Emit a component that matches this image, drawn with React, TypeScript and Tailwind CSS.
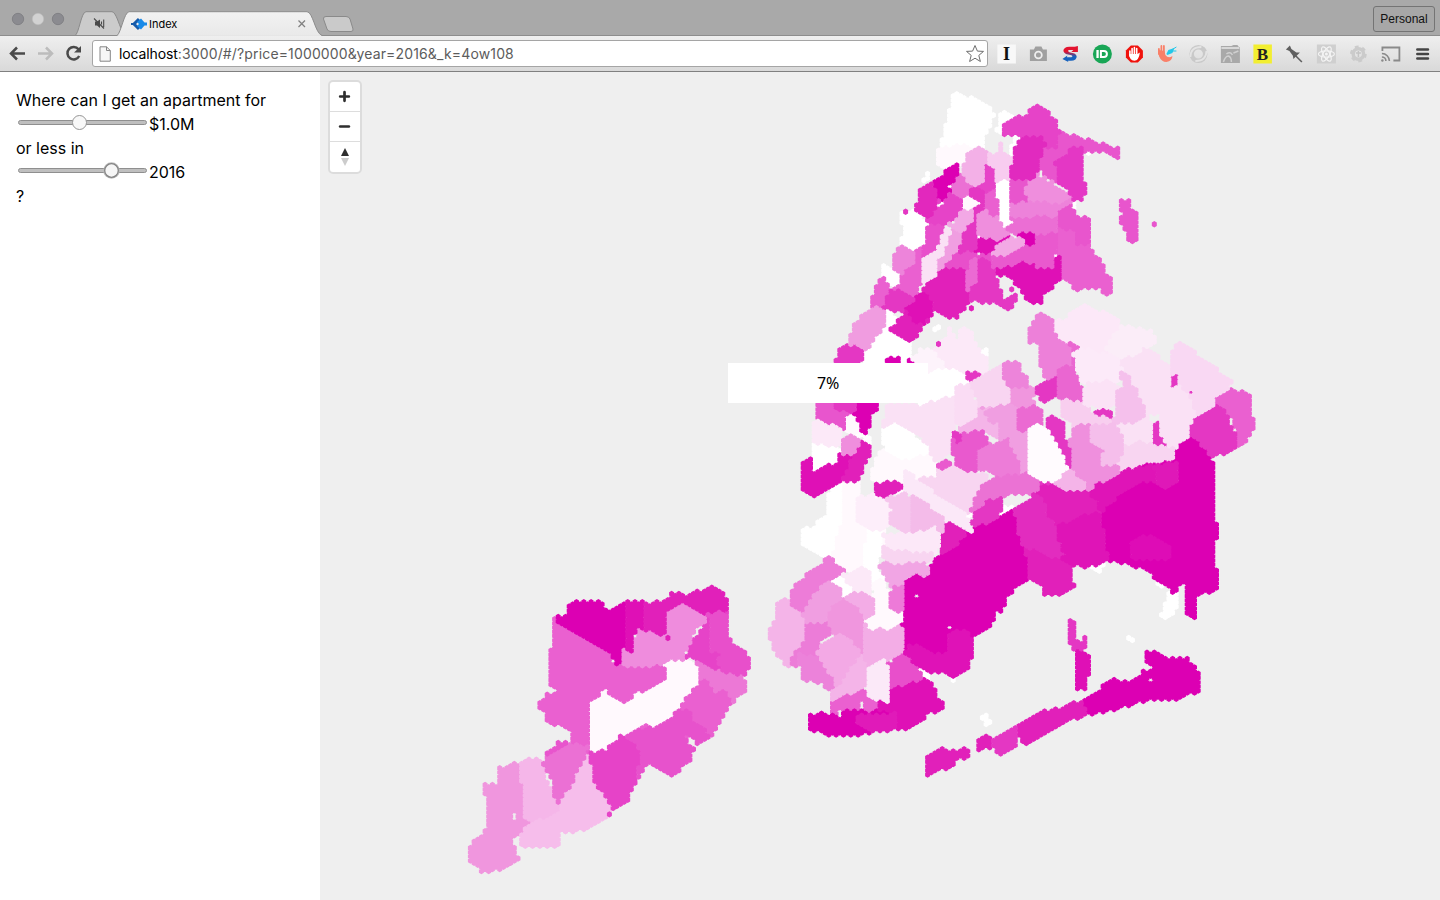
import React from "react";

type Shape = { color: string; pts: number[][]; x0: number; y0: number; x1: number; y1: number };

const A = "#dc00b3";
const B = "#df10b6";
const C = "#e120ba";
const D = "#e437c3";
const E = "#e84fcb";
const F = "#ea60d0";
const G = "#ed7ad8";
const H = "#ef8edd";
const I = "#f09ee1";
const J = "#f4b4e8";
const L = "#f8d5f1";
const M = "#fae1f5";
const N = "#fce9f8";
const O = "#fff9fd";
const W = "#ffffff";
const BG = "#efefef";

// Each sheet has its origin on the map; three sheet units make one pixel.
type Sheet = { ox: number; oy: number; areas: [string, string][] };

const bronx: Sheet = {
  ox: 840,
  oy: 80,
  areas: [
    [W, "333,42 350,37 380,50 415,58 440,70 467,95 455,125 455,150 440,160 432,205 400,200 380,190 300,203 300,190 310,150 322,110 330,80"],
    [W, "475,90 505,90 525,105 500,125 488,150 488,170 462,158 475,130"],
    [O, "300,200 325,195 380,185 400,205 378,230 368,265 340,250 320,265 290,265 288,215"],
    ["#f3b0e7", "400,200 445,212 455,240 440,255 435,290 415,320 395,320 370,300 365,265 378,230 400,215"],
    ["#f8ccf0", "450,220 475,215 474,188 490,188 492,220 520,235 512,270 510,295 490,295 470,308 465,262 445,250"],
    [W, "525,165 544,168 537,192 522,230 506,230 506,220"],
    ["#e643c8", "590,70 655,118 657,155 690,170 665,190 650,205 620,205 600,185 590,170 540,170 525,165 485,166 485,138 520,108 560,108 565,90"],
    ["#e12abf", "540,172 600,170 620,195 605,220 598,265 590,285 560,300 510,295 512,268 520,260 525,200"],
    ["#e855cd", "657,160 690,163 755,180 790,190 842,206 843,243 828,243 800,219 760,215 735,225 720,205 690,205 680,230 640,240 655,290 660,315 635,300 600,275 598,250 605,215 650,200"],
    ["#e437c5", "690,205 732,205 737,255 724,262 732,300 744,325 738,355 710,367 690,345 685,325 650,310 655,265 632,250 640,240 680,232"],
    ["#e855cd", "510,295 560,295 570,310 555,330 565,370 510,372"],
    [H, "590,278 690,345 695,365 660,372 640,375 590,365 565,370 555,325 568,305"],
    ["#ed82da", "510,372 565,365 640,375 695,360 690,380 660,395 650,415 635,415 610,400 580,412 520,410 508,400"],
    ["#eb6ed4", "508,410 580,410 610,402 635,415 652,410 655,450 620,465 590,465 560,452 540,462 510,462"],
    ["#e855cd", "660,385 700,365 708,410 754,407 754,490 710,495 705,455 655,440 652,400"],
    [F, "652,445 705,450 710,495 754,490 757,520 785,540 803,585 822,595 820,635 800,652 770,622 735,627 700,642 685,600 665,600 665,530 650,525"],
    ["#e959ce", "590,465 652,455 655,530 640,560 580,562 550,545 500,560 470,565 455,535 470,530 555,505 585,500"],
    [A, "542,455 575,452 588,475 585,500 565,505 545,480"],
    ["#f3a9e5", "455,525 470,500 520,470 550,475 555,505 520,515 490,530 460,530"],
    [B, "400,480 440,475 480,475 505,460 515,470 470,500 455,525 420,522 402,510"],
    [H, "410,390 440,395 465,410 485,420 495,448 520,455 505,462 480,478 415,472"],
    [W, "470,310 500,292 510,300 510,400 518,425 495,447 480,425 468,405 480,390 475,360 458,350"],
    ["#e643c8", "435,255 450,250 465,262 470,310 465,330 430,345 415,345 395,320 430,315 435,290"],
    [F, "435,340 460,330 475,360 478,390 465,412 440,400 435,380"],
    [A, "335,250 357,254 355,290 338,330 310,360 290,365 290,330 265,310 300,290 325,262"],
    ["#e228bd", "233,325 265,304 290,330 292,370 280,400 262,418 213,385 233,365"],
    ["#eb70d4", "335,315 350,288 370,285 395,320 390,345 370,358 340,345 330,330"],
    [D, "390,320 435,330 435,400 410,395 410,470 390,495 370,460 385,440 400,400 405,360 390,340"],
    ["#e643c8", "290,370 310,360 340,345 370,358 365,385 355,410 335,430 280,437 262,420 280,400"],
    [O, "365,385 372,362 395,345 405,362 420,365 415,385 395,390 375,390"],
    ["#f2a8e5", "375,390 400,388 400,415 385,440 365,460 345,460 335,432 355,410"],
    [D, "365,460 400,415 410,480 405,510 370,520 345,520 370,490"],
    ["#e84fcb", "310,560 345,520 400,510 415,530 455,525 460,560 410,545 390,540 390,575 350,562"],
    [I, "325,465 345,455 370,460 368,495 340,525 320,545 300,570 288,580 295,545 315,520"],
    [M, "312,440 333,440 335,465 320,475 315,520 290,545 288,595 250,615 247,535 280,530 280,510 300,480"],
    [E, "262,430 312,437 312,460 300,480 285,520 248,535 245,500 258,470"],
    [W, "178,403 210,388 267,430 258,460 255,495 210,512 178,490 190,455"],
    ["#ed84da", "170,490 210,512 225,510 228,540 210,570 180,580 155,547"],
    [F, "228,510 245,500 247,535 247,610 230,625 245,650 210,650 180,635 155,625 180,605 185,580 228,545"],
    [W, "138,546 155,560 182,588 182,610 160,622 145,600 122,584 125,564"],
    [F, "126,590 148,610 150,630 138,650 140,685 92,683 88,655 103,635 113,600"],
    [D, "150,630 180,632 210,650 240,648 225,665 195,680 190,700 140,690 138,655"],
    [C, "245,625 290,590 300,570 340,560 385,570 375,600 382,625 400,630 388,650 390,667 350,717 335,717 300,697 270,677 265,650 240,645"],
    ["#eb6ad3", "390,540 410,535 410,600 385,632 372,625 378,600"],
    [D, "412,545 440,535 465,565 470,600 480,620 500,640 482,673 440,673 400,663 385,667 388,640 410,600"],
    [B, "460,565 500,562 540,548 580,550 590,560 640,562 645,532 665,525 665,602 645,607 632,632 612,637 610,670 590,676 566,672 548,637 520,612 495,587 475,597"],
    [D, "484,672 504,650 525,638 536,655 522,670 518,692 500,696 484,684"],
    ["#e855cd", "836,362 855,356 874,362 874,385 897,397 897,483 878,494 860,482 858,450 843,432 836,420 846,400 836,390"],
  ],
};

const manhattan: Sheet = {
  ox: 790,
  oy: 290,
  areas: [
    ["#f09ce0", "238,53 285,58 285,100 270,125 250,150 235,185 215,180 200,165 162,160 188,115 198,88"],
    [D, "150,170 190,161 218,170 222,200 215,225 128,225 143,195"],
    [W, "282,70 300,63 322,73 315,105 300,130 320,135 340,140 360,155 367,200 350,215 355,250 220,250 225,200 240,170 265,140 282,110"],
    [C, "345,50 400,20 425,40 432,65 412,100 390,120 387,142 360,154 320,135 298,125 315,100 345,70"],
    [B, "345,50 375,25 400,0 435,40 430,65 410,95 380,110 355,80"],
    [A, "285,228 287,208 303,198 328,206 332,228"],
    [A, "352,228 352,203 378,209 376,228"],
    ["#fdf3fb", "373,190 400,173 430,183 465,220 450,245 420,250 370,250 370,215"],
    [N, "470,110 487,110 492,138 520,155 557,153 562,175 597,198 597,245 560,260 520,245 470,230 430,185 455,148 468,140"],
    [N, "503,118 547,110 554,145 530,160 503,142"],
    [W, "425,117 438,102 457,98 457,117 440,134 427,130"],
    [W, "568,170 590,173 600,197 575,197"],
    [M, "280,338 390,338 440,338 460,325 495,325 495,400 485,430 485,480 460,510 420,510 415,460 375,430 320,392 273,420 285,370"],
    [W, "400,250 465,230 525,245 545,275 510,290 495,325 460,325 440,335 390,345 380,300"],
    [L, "575,255 640,215 640,265 660,290 660,340 640,345 600,355 565,350 560,320 540,300 540,275"],
    ["#fadcf4", "500,290 540,280 545,305 565,350 555,390 520,405 495,410 490,370 500,325"],
    [D, "528,253 545,246 577,246 574,264 547,280 528,270"],
    ["#ed84da", "638,212 682,212 692,235 717,260 717,290 700,290 660,295 640,265"],
    ["#f096de", "660,295 735,290 730,350 710,360 680,355 660,340"],
    [I, "515,405 555,385 565,352 660,340 685,360 690,425 715,420 717,570 690,560 660,445 630,460 595,425 570,420 520,430"],
    [J, "498,420 520,403 560,385 565,352 600,350 585,375 600,395 625,400 630,455 595,425 570,420 520,432"],
    ["#e959ce", "485,425 510,435 560,420 595,430 595,465 560,480 560,540 520,545 490,515 485,480"],
    ["#e959ce", "440,525 470,506 495,520 492,547 460,540"],
    ["#ed7cd8", "560,480 595,465 630,450 655,445 670,480 705,520 705,555 640,565 600,550 562,540"],
    ["#e437c3", "483,422 510,433 517,455 500,467 485,445"],
    ["#eb6ad2", "682,360 705,355 732,345 760,355 757,400 715,420 700,430 682,420"],
    ["#e855cd", "75,330 205,330 190,365 165,385 160,420 110,405 77,382"],
    [D, "135,330 205,330 195,365 165,365 135,352"],
    [A, "190,370 205,330 272,330 262,365 247,375 242,400 228,432 210,427 205,385"],
    [N, "78,385 110,400 160,415 155,470 145,465 100,470 68,457 66,403"],
    [O, "175,375 195,378 208,410 212,435 175,440 165,420"],
    [W, "210,430 235,425 244,460 218,457"],
    [H, "155,440 200,435 212,465 190,490 155,490 152,465"],
    [W, "63,456 100,460 150,475 150,505 140,525 80,555 55,545 60,500"],
    [C, "215,450 246,468 237,515 222,532 214,574 155,574 145,560 150,510 190,490"],
    [B, "31,535 43,503 68,506 64,540 75,550 115,525 145,520 148,492 188,493 165,562 115,593 75,624 31,599"],
    [W, "273,420 315,392 375,430 380,450 415,465 418,490 380,500 340,510 280,480"],
    [O, "280,480 340,508 400,490 415,490 445,530 450,565 400,562 355,575 350,590 300,575 255,582 241,560 253,500 275,480"],
    [L, "395,575 440,565 445,540 490,520 520,545 560,545 600,560 600,580 570,600 570,625 540,640 540,660 520,660 480,640"],
  ],
};

const queens: Sheet = {
  ox: 1000,
  oy: 290,
  areas: [
    ["#ed80d9", "118,66 162,80 164,120 175,155 215,165 218,190 215,225 185,240 150,264 128,264 126,230 113,225 113,165 81,163 83,133 93,104"],
    ["#ea66d1", "215,170 235,155 240,172 222,190 222,230 240,275 250,300 254,340 260,359 210,332 170,332 175,240 215,225"],
    [D, "103,300 165,253 175,275 170,312 135,342 113,325"],
    ["#fce8f8", "163,88 200,92 203,68 245,43 285,58 347,73 367,103 345,140 325,165 320,195 280,185 240,175 215,160 180,155 172,125"],
    ["#fbedf8", "345,130 370,106 430,116 462,121 469,160 440,180 400,195 365,205 335,200 315,180"],
    ["#fceaf9", "220,190 260,175 290,190 355,195 365,240 350,295 320,290 260,280 240,270"],
    ["#fbe2f6", "248,285 320,275 355,290 345,350 300,355 252,345"],
    [M, "360,205 400,195 430,173 477,183 482,210 512,225 520,270 560,295 580,340 585,370 580,400 570,435 525,475 460,465 420,455 370,470 360,440 345,400 430,385 425,350 400,300 385,260 365,240"],
    [BG, "447,385 460,368 482,385 478,398 455,400"],
    ["#f9d8f3", "540,150 707,278 685,300 645,325 640,350 605,377 585,362 570,310 530,280 515,260 510,215 520,168"],
    ["#f5c0ec", "360,240 385,250 395,280 410,300 430,350 435,385 400,398 345,400 350,310 365,290"],
    [D, "281,370 306,348 317,350 322,366 339,368 341,400 320,390 300,379"],
    [D, "512,260 524,244 537,246 537,272 526,290 510,290"],
    [D, "455,400 475,394 482,440 504,460 502,474 456,470"],
    ["#f8ceef", "180,340 210,330 245,338 285,370 330,392 345,400 270,405 215,410 195,390 175,375"],
    ["#ef8fdd", "215,410 270,405 275,450 315,480 300,520 360,525 360,560 320,578 280,600 262,612 255,575 225,545 210,500"],
    ["#f5beeb", "270,410 345,400 365,440 370,490 350,525 295,520 315,490 300,462 272,460"],
    [L, "370,480 420,455 460,465 525,475 523,510 440,530 400,545 360,555 362,500"],
    [I, "32,430 85,418 85,560 70,555 60,520 45,490"],
    ["#fffbfe", "85,420 135,402 155,440 180,480 205,520 200,535 185,550 180,570 150,574 120,578 85,562"],
    ["#e437c3", "136,388 165,371 192,400 197,440 210,470 219,500 213,542 195,520 180,475 150,430"],
    [J, "160,575 210,535 235,555 260,580 264,610 185,605"],
    ["#eb72d4", "-60,620 -30,575 0,560 50,555 80,550 130,580 105,600 100,614 60,612 0,612 -30,635"],
    [D, "103,610 110,578 160,576 180,602 130,625"],
    [F, "643,325 685,296 754,306 759,380 769,400 757,430 732,462 705,482 690,470 710,430 690,375 650,345"],
    [D, "633,346 660,350 680,365 690,400 708,430 708,482 670,492 635,499 600,460 566,442 568,410 588,380 620,373"],
  ],
};

const brooklyn: Sheet = {
  ox: 760,
  oy: 480,
  areas: [
    [W, "123,146 163,140 178,113 198,103 198,43 228,10 270,5 255,110 240,130 215,232 185,237 150,212 121,192"],
    [O, "245,5 302,5 305,45 330,50 380,50 380,150 370,200 330,265 300,265 250,280 225,250 215,230 220,190 240,140"],
    ["#fdeefa", "290,50 340,45 380,60 400,100 385,140 365,155 335,150 295,135"],
    [O, "335,5 345,-10 430,-20 455,30 430,42 400,40 380,60 345,55"],
    [W, "320,150 365,150 370,205 355,240 350,280 375,290 388,350 385,400 345,400 345,350 330,290 310,250"],
    [O, "335,310 375,290 388,350 390,390 440,400 440,430 390,450 345,445 325,458 310,430 340,405 345,350"],
    [C, "343,10 410,3 432,25 400,42 370,58 343,45"],
    ["#f6c6ed", "385,55 430,40 450,50 455,150 430,160 385,130 395,95"],
    ["#f4bbe9", "450,50 485,60 555,120 560,165 530,155 490,155 455,155"],
    ["#fbe8f8", "430,-10 440,-30 480,10 520,40 620,100 637,155 610,158 555,120 485,62 430,35"],
    [L, "480,5 490,-10 600,-10 690,-10 660,50 630,95 615,100"],
    ["#fce8f8", "370,160 430,160 490,150 525,138 542,165 535,200 520,235 480,225 375,205"],
    [L, "370,205 480,220 530,220 500,250 460,255 365,245"],
    ["#f1a5e4", "360,250 500,245 512,290 450,285 430,295 425,320 390,320 375,290 355,265"],
    [G, "390,322 430,315 432,390 410,394 390,375"],
    [C, "555,120 620,155 625,185 600,205 535,225 545,175 555,160"],
    ["#ed7cd8", "215,226 227,255 257,275 240,290 190,310 180,330 145,370 135,402 93,384 86,340 108,306 180,251"],
    [I, "145,370 190,310 215,305 240,325 250,350 310,390 310,520 270,510 240,470 210,460 200,425 145,430 130,400"],
    ["#f096de", "250,350 310,390 310,520 270,510 240,470 210,460 200,400 225,370"],
    [W, "208,300 250,288 278,305 278,335 250,353 240,325"],
    [N, "250,290 290,262 330,270 335,345 310,350 278,330"],
    [J, "80,350 95,380 125,400 135,420 135,470 115,520 90,564 48,532 23,465 43,420 43,370"],
    ["#ec7cd8", "135,430 200,425 210,460 180,490 170,525 140,532 117,520 115,562 90,560 92,530 115,510 135,470"],
    ["#f3ace6", "255,350 280,335 340,350 345,400 320,415 310,430 305,395 270,360"],
    ["#f3a9e5", "170,520 200,480 245,465 270,480 305,525 260,570 250,600 215,640 190,560"],
    ["#f4b4e8", "208,635 250,600 260,570 310,525 325,530 325,600 310,625 270,640 212,668"],
    ["#f3ade6", "310,430 330,450 390,450 440,435 442,480 430,520 390,545 360,540 320,560 310,520"],
    ["#ec82da", "120,530 175,525 195,560 225,605 210,637 175,607 120,602"],
    ["#fbe9f8", "322,565 365,540 388,555 388,665 335,655 322,630"],
    [E, "388,555 430,520 450,545 480,565 490,590 450,610 388,620"],
    [F, "209,660 270,640 310,625 335,655 355,665 355,700 300,705 230,705 209,700"],
    [A, "143,710 185,693 235,713 260,690 300,690 330,700 355,690 360,660 388,665 388,620 450,610 495,590 522,605 532,650 567,680 520,697 502,702 497,722 430,752 350,757 320,762 270,772 210,770 143,744"],
    [B, "355,690 360,660 388,665 388,620 450,610 495,590 522,605 532,650 567,680 520,697 502,702 497,722 430,752 410,747 400,700"],
    ["#e01ab9", "290,705 410,700 410,752 330,759 290,735"],
  ],
};

const jamaica: Sheet = {
  ox: 900,
  oy: 480,
  areas: [
    [A, "12,293 50,283 90,290 90,245 130,220 220,155 220,130 270,130 345,85 360,180 380,210 388,302 322,347 312,392 282,400 287,427 245,452 200,477 140,460 150,520 60,520 12,510"],
    [A, "575,40 580,10 615,0 680,-30 740,-50 820,-60 825,-95 865,-130 900,-110 940,-60 949,-50 949,130 959,145 959,170 949,180 949,260 959,275 957,322 925,337 892,347 887,372 894,424 880,424 851,399 860,350 850,312 837,312 834,345 800,327 800,312 710,262 650,249 620,242 600,257 570,264 513,257 495,235 480,190 465,150 600,100"],
    ["#e22cbf", "340,85 410,45 435,60 440,95 470,140 480,190 495,235 450,230 380,205 360,160"],
    [C, "405,40 410,10 460,10 490,30 580,30 615,80 600,105 540,110 475,140 445,110 430,50"],
    [C, "375,205 420,210 450,235 495,235 517,250 522,310 530,322 500,334 480,345 425,347 423,312 388,300"],
    ["#df14b7", "465,150 540,110 600,100 615,170 625,245 570,262 510,257 495,235 480,190"],
    ["#df14b7", "570,45 582,10 615,0 680,-30 760,-50 800,0 710,10 640,60 600,100 590,60"],
    ["#df18b8", "760,-40 830,-55 835,0 800,30 770,15"],
    ["#de0cb6", "690,190 730,165 780,180 810,200 812,235 690,235"],
    ["#df12b7", "20,500 60,495 90,520 140,520 140,460 200,445 224,490 217,530 212,567 180,582 160,600 138,579 80,579 45,545 20,530"],
    ["#eb72d4", "240,20 290,0 410,0 415,38 300,50 250,80 208,105 220,60"],
    [D, "235,80 270,55 310,55 312,75 300,105 265,130 218,140 218,105"],
    [W, "296,107 320,80 345,70 342,88 305,112"],
    [W, "570,260 600,257 620,243 612,266 590,280"],
    [W, "752,295 790,307 795,330 776,322"],
    [W, "798,338 832,338 839,370 822,402 795,424 775,407 793,380"],
    [W, "675,478 697,458 708,470 704,500 695,500"],
    [W, "236,712 258,693 268,712 280,740 256,739"],
    [W, "53,560 70,563 94,583 90,602 66,592"],
    [D, "500,420 520,416 532,450 532,485 545,488 548,468 566,470 566,505 542,508 530,518 508,490 500,480"],
    [B, "523,512 545,508 576,533 576,579 564,584 564,622 545,632 523,622"],
    [C, "73,830 105,811 137,801 155,813 212,801 214,840 185,834 140,872 120,870 95,890 74,880"],
    [C, "216,795 245,766 277,768 277,800 240,814"],
    [D, "275,775 315,751 350,741 354,802 305,832 283,817"],
    [C, "350,741 425,684 440,691 500,678 550,656 570,704 530,722 510,714 478,746 465,744 412,779 365,799"],
    [A, "550,658 575,636 601,633 603,610 630,594 690,606 720,576 755,563 733,545 733,510 765,511 800,538 850,526 884,550 904,580 904,646 865,646 830,664 740,662 690,677 630,696 575,706 555,687"],
  ],
};

const staten: Sheet = {
  ox: 460,
  oy: 580,
  areas: [
    [F, "276,110 390,190 460,225 500,255 560,258 720,250 755,270 860,290 864,335 822,367 787,417 752,472 722,499 680,470 650,400 500,480 390,520 330,490 330,450 300,437 253,430 253,397 230,392 246,346 290,335 263,317 264,233 276,200"],
    [A, "286,102 300,102 320,113 320,78 350,60 432,61 437,88 460,88 498,66 500,190 485,210 485,252 465,252 455,222 400,190 300,135 286,137"],
    [B, "498,66 525,58 560,61 570,120 555,155 540,145 520,165 522,220 488,210 498,190"],
    [C, "555,68 600,63 640,36 690,43 755,16 809,53 809,110 780,88 740,105 665,70 620,90 618,165 580,160 555,155"],
    ["#ef8cdd", "535,140 580,160 620,170 620,100 608,95 665,70 740,105 738,130 700,160 690,190 672,225 685,248 590,255 490,260 487,205 518,220"],
    ["#e643c8", "740,110 800,90 805,175 852,210 874,245 872,270 835,292 770,275 720,245 675,230 690,190 710,160 740,140"],
    [E, "745,110 780,88 809,107 809,175 852,208 874,243 872,270 835,294 790,275 770,240 790,210 745,225"],
    ["#ec78d6", "720,250 760,270 852,288 864,337 820,367 800,325 765,340 750,300 720,295"],
    [O, "390,365 435,330 500,372 520,345 615,300 620,285 608,250 625,240 690,240 717,258 717,315 685,345 650,400 620,420 590,445 560,435 480,470 435,510 400,520 388,515"],
    ["#e752cc", "650,395 685,390 700,420 750,465 722,501 715,495 680,462 670,470 710,505 687,547 640,599 570,552 532,602 512,632 512,659 437,716 455,680 400,600 390,520 435,510 490,470 560,440 590,445 620,420"],
    ["#e643c8", "390,520 435,510 480,470 500,470 540,510 532,602 512,632 512,659 437,716 440,690 455,680 400,600"],
    ["#e855cd", "253,534 253,513 275,503 290,484 335,486 335,510 280,520"],
    ["#eb70d4", "245,540 290,510 330,490 385,500 370,560 295,670 265,580"],
    ["#f6bdeb", "380,520 390,525 400,600 455,680 437,712 400,739 325,764 304,752 302,807 230,807 178,799 178,765 210,720 260,710 300,670 330,620"],
    ["#f5b6e9", "170,560 220,526 245,545 270,620 295,670 300,690 265,715 210,725 190,710 190,620"],
    ["#f096de", "145,545 178,546 180,600 190,630 190,710 215,730 160,775 170,815 184,835 165,854 120,872 65,882 23,842 23,798 78,750 78,655 64,640 68,610 110,610 111,580 99,572 118,551 140,563"],
  ],
};

function toShapes(sheet: Sheet): Shape[] {
  return sheet.areas.map(([color, text]) => {
    const pts = text.split(" ").map((p) => {
      const [x, y] = p.split(",").map(Number);
      return [sheet.ox + x / 3, sheet.oy + y / 3];
    });
    const xs = pts.map((p) => p[0]);
    const ys = pts.map((p) => p[1]);
    return { color, pts, x0: Math.min(...xs), x1: Math.max(...xs), y0: Math.min(...ys), y1: Math.max(...ys) };
  });
}

const shapes: Shape[] = [bronx, manhattan, queens, brooklyn, jamaica, staten].flatMap(toShapes).reverse();

function colorAt(x: number, y: number): string | null {
  for (const s of shapes) {
    if (x < s.x0 || x > s.x1 || y < s.y0 || y > s.y1) continue;
    let inside = false;
    for (let i = 0, j = s.pts.length - 1; i < s.pts.length; j = i++) {
      const [xi, yi] = s.pts[i];
      const [xj, yj] = s.pts[j];
      if (yi > y !== yj > y && x < ((xj - xi) * (y - yi)) / (yj - yi) + xi) inside = !inside;
    }
    if (inside) return s.color === BG ? null : s.color;
  }
  return null;
}

// Single cells, and cells left empty.
const singles: [number, number, string][] = [
  [1154.3, 224.3, "#e855cd"], [905.7, 212.7, D], [971.3, 308, C], [1011.7, 288.3, D],
  [938.3, 344, D], [1190.7, 391.7, D], [668, 639.3, C], [949.7, 185.3, W], [941, 203.7, W],
  [939, 205.5, W], [977, 238, W], [980, 235.5, W], [1055.7, 255.3, W], [1087, 154, W],
  [1089.5, 152, W], [1073.7, 202, W], [1074.3, 207, W], [927, 173.5, W], [924.5, 179, W], [928, 177, W],
  [968, 517.5, W], [971, 516, W], [953, 679, W],
];
const holes: [number, number][] = [
  [613.3, 659.3], [514.3, 812.7], [514.3, 817], [916.7, 595], [949.5, 625.7], [1150.8, 678.5],
  [862, 704], [862, 708.5], [839.5, 711], [839.5, 715],
];

const DX = 3.657;
const DY = 4.2;
const X0 = 1154.3 - DX * 200;
const Y0 = 224.3 - DY * 40;

function snap(x: number, y: number): string {
  const c = Math.round((x - X0) / DX);
  const r = Math.round((y - Y0 - (c % 2 ? DY / 2 : 0)) / DY);
  return c + ":" + r;
}

function buildCells(): [string, string][] {
  const probes = Array.from({ length: 8 }, (_, k) => {
    const a = ((22.5 + 45 * k) * Math.PI) / 180;
    return [Math.cos(a), Math.sin(a)];
  });
  const forced = new Map(singles.map(([x, y, c]) => [snap(x, y), c]));
  const empty = new Set(holes.map(([x, y]) => snap(x, y)));
  const paths = new Map<string, string[]>();
  for (let c = 0; c < 235; c++) {
    for (let r = 0; r < 205; r++) {
      const x = X0 + c * DX;
      const y = Y0 + r * DY + (c % 2 ? DY / 2 : 0);
      const key = c + ":" + r;
      if (empty.has(key)) continue;
      let color = forced.get(key) ?? null;
      if (!color) {
        const own = colorAt(x, y);
        const reach = own ? 2.7 : 3.8;
        const around = probes.map(([dx, dy]) => colorAt(x + dx * reach, y + dy * reach)).filter(Boolean) as string[];
        if (own ? around.length >= 5 : around.length >= 7) color = own ?? around[0];
      }
      if (!color) continue;
      const d = `M${x.toFixed(1)} ${(y - 3.2).toFixed(1)}l2.5 1.5v3.4l-2.5 1.5l-2.5 -1.5v-3.4z`;
      const list = paths.get(color);
      if (list) list.push(d);
      else paths.set(color, [d]);
    }
  }
  const order = [W, O];
  return [...paths.entries()]
    .sort((p, q) => order.indexOf(q[0]) - order.indexOf(p[0]))
    .map(([color, ds]) => [color, ds.join("")]);
}

const cells = buildCells();

function HexMap() {
  return (
    <svg className="block h-full w-full" viewBox="320 72 1120 828">
      {cells.map(([color, d]) => (
        <path key={color} d={d} fill={color} />
      ))}
    </svg>
  );
}

function TabStrip() {
  return (
    <div className="relative h-9 w-full bg-[#a9a9a9]">
      <svg className="block h-9 w-[380px]" viewBox="0 0 380 36">
        <defs>
          <linearGradient id="tab" x1="0" y1="0" x2="0" y2="1">
            <stop offset="0" stopColor="#f2f2f2" />
            <stop offset="1" stopColor="#e9e9e9" />
          </linearGradient>
        </defs>
        <circle cx="18" cy="19" r="5.7" fill="#8b8b90" stroke="#77777b" strokeWidth=".7" />
        <circle cx="38" cy="19" r="5.7" fill="#d2d2d2" stroke="#bdbdbd" strokeWidth=".5" />
        <circle cx="58" cy="19" r="5.7" fill="#8b8b90" stroke="#77777b" strokeWidth=".7" />
        <path d="M75 35.5C79 34 81 12 86 11.700H112C116 12 119 25 121.500 29L118 36H75Z" fill="#cbcbcb" stroke="#8a8a8a" />
        <path d="M0 35.500H117C121 33 124 12.500 129 11.700H307C313 12 315 33 322 35.500H380" fill="url(#tab)" stroke="#8d8d8d" />
        <path d="M118 36H321" stroke="#efefef" strokeWidth="1.500" />
        <path d="M326 16.500H346Q349 16.500 350 19L353 29Q353.500 31.500 351 31.500H331Q328 31.500 327 29L323.500 19Q323 16.500 326 16.500Z" fill="#cacaca" stroke="#8a8a8a" />
        <path d="M95 21.500V25.500H97L100 28V19.500L97 21.500Z" fill="#4b4b4b" />
        <path d="M94 18.500L104 28.500M101.500 21.500V24.500M103.700 19.500V27" fill="none" stroke="#4b4b4b" strokeWidth="1.100" />
        <path d="M139 19L134 24L139 29" fill="none" stroke="#165baa" strokeWidth="3" />
        <path d="M131 24H135" stroke="#165baa" strokeWidth="2" />
        <path d="M137 22L141 18.500L144.500 22.500H147V25.500H144.500L141 29.500L137 26L139 24Z" fill="#198ae8" />
        <path d="M298.500 20.500L305 27M305 20.500L298.500 27" stroke="#828282" strokeWidth="1.300" />
      </svg>
      <span className="absolute left-[149px] top-[16px] font-['Inter','Liberation_Sans',sans-serif] text-[11px] leading-4 text-black">Index</span>
      <div className="absolute right-[5px] top-[6px] flex h-[26px] w-[62px] items-center justify-center rounded-[3px] border border-[#747474] bg-[#a7a7a7] font-['Liberation_Sans',sans-serif] text-[12px] text-[#111]">
        Personal
      </div>
      <div className="absolute bottom-0 left-[380px] right-0 h-px bg-[#8d8d8d]" />
    </div>
  );
}

function Ext({ children }: { children: React.ReactNode }) {
  return (
    <svg className="h-6 w-8 shrink-0" viewBox="-16.4 -12 32 24">
      {children}
    </svg>
  );
}

function Toolbar() {
  return (
    <div className="flex h-9 w-full items-center border-b border-[#808080] bg-linear-to-b from-[#efefef] to-[#d9d9d9]">
      <svg className="h-[35px] w-[92px] shrink-0" viewBox="0 0 92 35" fill="none">
        <path d="M25 17.500H11M17 11.500L11 17.500L17 23.500" stroke="#4a4a4a" strokeWidth="2.500" />
        <path d="M38 17.500H52M46 11.500L52 17.500L46 23.500" stroke="#bcbcbc" strokeWidth="2.500" />
        <path d="M78.500 13.300A6.200 6.200 0 1 0 79.200 20" stroke="#4a4a4a" strokeWidth="2.500" />
        <path d="M81 10V16.500H74Z" fill="#4a4a4a" />
      </svg>
      <div className="flex h-[27px] w-[896px] shrink-0 items-center rounded-[3px] border border-[#a5a5a5] bg-white">
        <svg className="ml-[6px] h-4 w-3 shrink-0" viewBox="0 0 12 16">
          <path d="M1 .8H7.500L11.300 4.500V15.200H1Z" fill="#f7f7f7" stroke="#858585" />
          <path d="M7.500 .8V4.500H11.300" fill="none" stroke="#858585" />
        </svg>
        <span className="ml-[8px] grow whitespace-nowrap font-['Inter','Liberation_Sans',sans-serif] text-[14px] tracking-[0.145px] text-[#5c5c5c]">
          <span className="tracking-[-0.12px] text-black">localhost</span>:3000/#/?price=1000000&amp;year=2016&amp;_k=4ow108
        </span>
        <svg className="mr-[2px] h-5 w-5" viewBox="-10 -10 20 20">
          <path d="M0 -8.500L2.400 -2.900L8.500 -2.600L3.800 1.400L5.400 7.500L0 4.200L-5.400 7.500L-3.800 1.400L-8.500 -2.600L-2.400 -2.900Z" fill="#fff" stroke="#6e6e6e" />
        </svg>
      </div>
      <div className="ml-[2px] flex">
        <Ext>
          <rect x="-9" y="-9.500" width="18.500" height="19" fill="#f8f8f8" />
          <text x="0" y="6" textAnchor="middle" fontFamily="Liberation Serif" fontWeight="700" fontSize="18" fill="#111">I</text>
        </Ext>
        <Ext>
          <path d="M-8.500 -4.500H-4.500L-3 -7.500H3L4.500 -4.500H8.500V7H-8.500Z" fill="#a0a0a0" />
          <circle cy="1" r="3.400" fill="none" stroke="#eee" strokeWidth="1.800" />
        </Ext>
        <Ext>
          <defs>
            <linearGradient id="swirl" x1="0" y1="0" x2="0" y2="1">
              <stop offset=".35" stopColor="#e3132f" />
              <stop offset=".65" stopColor="#1762bd" />
            </linearGradient>
          </defs>
          <path d="M7.500 -8V-2H1L3 -4H-1.500Q-3.500 -3 -1 -1.800L4 -.5Q8 2 5 5.500Q3 7 0 6.800H-2.500L-2 8L-8 5L-3 1.500L-3.500 3.200H1Q3 2.500 1 1.300L-4.500 0Q-9 -3 -5.500 -6Q-4 -7.200 -1 -7.200H4.500Z" fill="url(#swirl)" />
        </Ext>
        <Ext>
          <circle r="9.500" fill="#19a656" />
          <rect x="-6" y="-4" width="2.300" height="8" fill="#fff" />
          <path d="M-1.500 -3H1.500A3 3 0 0 1 1.500 3H-1.500Z" fill="none" stroke="#fff" strokeWidth="2" />
        </Ext>
        <Ext>
          <path d="M-3.500 -8.500H3.500L8.500 -3.500V3.500L3.500 8.500H-3.500L-8.500 3.500V-3.500Z" fill="#f0120c" />
          <path d="M-4.500 2V-3M-2.300 1V-5.500M0 1V-6.500M2.300 1V-5.500" stroke="#fff" strokeWidth="1.600" strokeLinecap="round" />
          <path d="M-5.200 0H3L5.500 -1.500Q4.500 6.500 0 6.800Q-5 6.500 -5.200 0Z" fill="#fff" />
        </Ext>
        <Ext>
          <path d="M-7.500 -4V2Q-5 8 0 8Q6 7 6 2Q2 5 -1 1L-2 -3" fill="#f98069" />
          <path d="M-7.500 0V-5M-5 0V-8M-2.500 0V-8" stroke="#f98069" strokeWidth="1.800" strokeLinecap="round" />
          <path d="M0 0L2 -4L8 -6L6 -1L1 1Z" fill="#23c8ea" />
          <path d="M5 -4L10 -7M5 -3L10 -3" stroke="#23c8ea" />
        </Ext>
        <Ext>
          <circle r="6.800" fill="none" stroke="#c9c9c9" strokeWidth="4.500" />
          <path d="M-8 3Q-8 -7 3 -7M8 -3Q8 7 -3 7" fill="none" stroke="#e4e4e4" strokeWidth="1.800" />
        </Ext>
        <Ext>
          <path d="M-9.500 -8H1L3 -9H7L8.500 -7H9.500V9H-9.500Z" fill="#a9a9a9" />
          <path d="M-9 -6H9" stroke="#d8d8d8" strokeWidth="2" />
          <path d="M-7 8Q-5 2 -2 2Q1 3 1 8M-4 0Q0 -3 2 1M3 -1L8 -3" fill="none" stroke="#d0d0d0" strokeWidth="1.500" />
        </Ext>
        <Ext>
          <rect x="-9" y="-9.500" width="18.500" height="19" fill="#f2ee31" />
          <text x="0" y="5.800" textAnchor="middle" fontFamily="Liberation Serif" fontWeight="700" fontSize="17" fill="#222">B</text>
        </Ext>
        <Ext>
          <path d="M-4.500 -8.500L-3 -5L2 -1.500L5.500 -1.500L-1 5L-1.500 1.800L-5 -3L-8.500 -4.500Z" fill="#606060" />
          <path d="M1 1.500L7.500 8" stroke="#606060" strokeWidth="1.600" />
        </Ext>
        <Ext>
          <rect x="-9.500" y="-9.500" width="19" height="19" fill="#cfcfcf" />
          <g fill="none" stroke="#f4f4f4" strokeWidth="1.200">
            <ellipse rx="8" ry="3.200" />
            <ellipse rx="8" ry="3.200" transform="rotate(60)" />
            <ellipse rx="8" ry="3.200" transform="rotate(120)" />
          </g>
          <circle r="1.500" fill="#f4f4f4" />
        </Ext>
        <Ext>
          <circle r="5.200" fill="none" stroke="#cbcbcb" strokeWidth="3.500" />
          <circle r="7.300" fill="none" stroke="#cbcbcb" strokeWidth="2.200" strokeDasharray="3.820 3.820" />
          <path d="M0 -3V3M-2.500 -1H2.500" stroke="#c4c4c4" strokeWidth="1.500" />
        </Ext>
        <Ext>
          <path d="M-8 -3V-6.500H9V6.500H3" fill="none" stroke="#8a8a8a" strokeWidth="1.800" />
          <path d="M-8.500 -.5A7.500 7.500 0 0 1 -1 7M-8.500 3A4 4 0 0 1 -4.500 7" fill="none" stroke="#8a8a8a" strokeWidth="1.600" />
          <circle cx="-8" cy="6.500" r="1.200" fill="#8a8a8a" />
        </Ext>
        <Ext>
          <path d="M-5 -4.500H5.500M-5 0H5.500M-5 4.500H5.500" stroke="#444" strokeWidth="2.700" strokeLinecap="round" />
        </Ext>
      </div>
    </div>
  );
}

function Slider({ focused }: { focused?: boolean }) {
  return (
    <svg className="h-6 w-[133px] shrink-0" viewBox="0 0 133 24">
      <rect x="2.500" y="8.500" width="128" height="4" rx="2" fill="#bfbfbf" stroke="#8f8f8f" />
      {focused ? (
        <>
          <circle cx="95.500" cy="10.500" r="8.300" fill="#bdbdbd" />
          <circle cx="95.500" cy="10.500" r="6.800" fill="#f6f6f6" stroke="#858585" strokeWidth="1.300" />
        </>
      ) : (
        <circle cx="63.500" cy="10.500" r="7" fill="#f8f8f8" stroke="#969696" />
      )}
    </svg>
  );
}

function Sidebar() {
  return (
    <div className="w-80 shrink-0 bg-white px-4 pt-4 font-['Inter','Liberation_Sans',sans-serif] text-[16px] leading-6 text-black">
      <p>Where can I get an apartment for</p>
      <div className="flex"><Slider /><span>$1.0M</span></div>
      <p>or less in</p>
      <div className="flex"><Slider focused /><span>2016</span></div>
      <p>?</p>
    </div>
  );
}

function ZoomControls() {
  return (
    <div className="absolute left-[8px] top-[8px] flex h-[94px] w-[34px] flex-col rounded-[5px] border-2 border-[#dcdcdc] bg-white">
      <svg className="h-[30px] w-[30px] border-b border-[#ddd]" viewBox="0 0 30 30">
        <path d="M14.500 10.500V19.500M10 15H19" stroke="#2e2e2e" strokeWidth="2.800" strokeLinecap="round" />
      </svg>
      <svg className="h-[30px] w-[30px] border-b border-[#ddd]" viewBox="0 0 30 30">
        <path d="M10 15H19" stroke="#2e2e2e" strokeWidth="2.800" strokeLinecap="round" />
      </svg>
      <svg className="h-[30px] w-[30px]" viewBox="0 0 30 30">
        <path d="M15 6L19 14H11Z" fill="#2e2e2e" />
        <path d="M15 24L19 16H11Z" fill="#ccc" />
      </svg>
    </div>
  );
}

export default function App() {
  return (
    <div className="flex h-[900px] w-[1440px] flex-col overflow-hidden bg-white">
      <TabStrip />
      <Toolbar />
      <div className="flex min-h-0 grow">
        <Sidebar />
        <div className="relative grow bg-[#efefef]">
          <HexMap />
          <ZoomControls />
          <div className="absolute left-[408px] top-[291px] flex h-10 w-[200px] items-center justify-center bg-white font-['Noto_Sans',sans-serif] text-[16px] tracking-[-0.3px] text-black">
            7%
          </div>
        </div>
      </div>
    </div>
  );
}
